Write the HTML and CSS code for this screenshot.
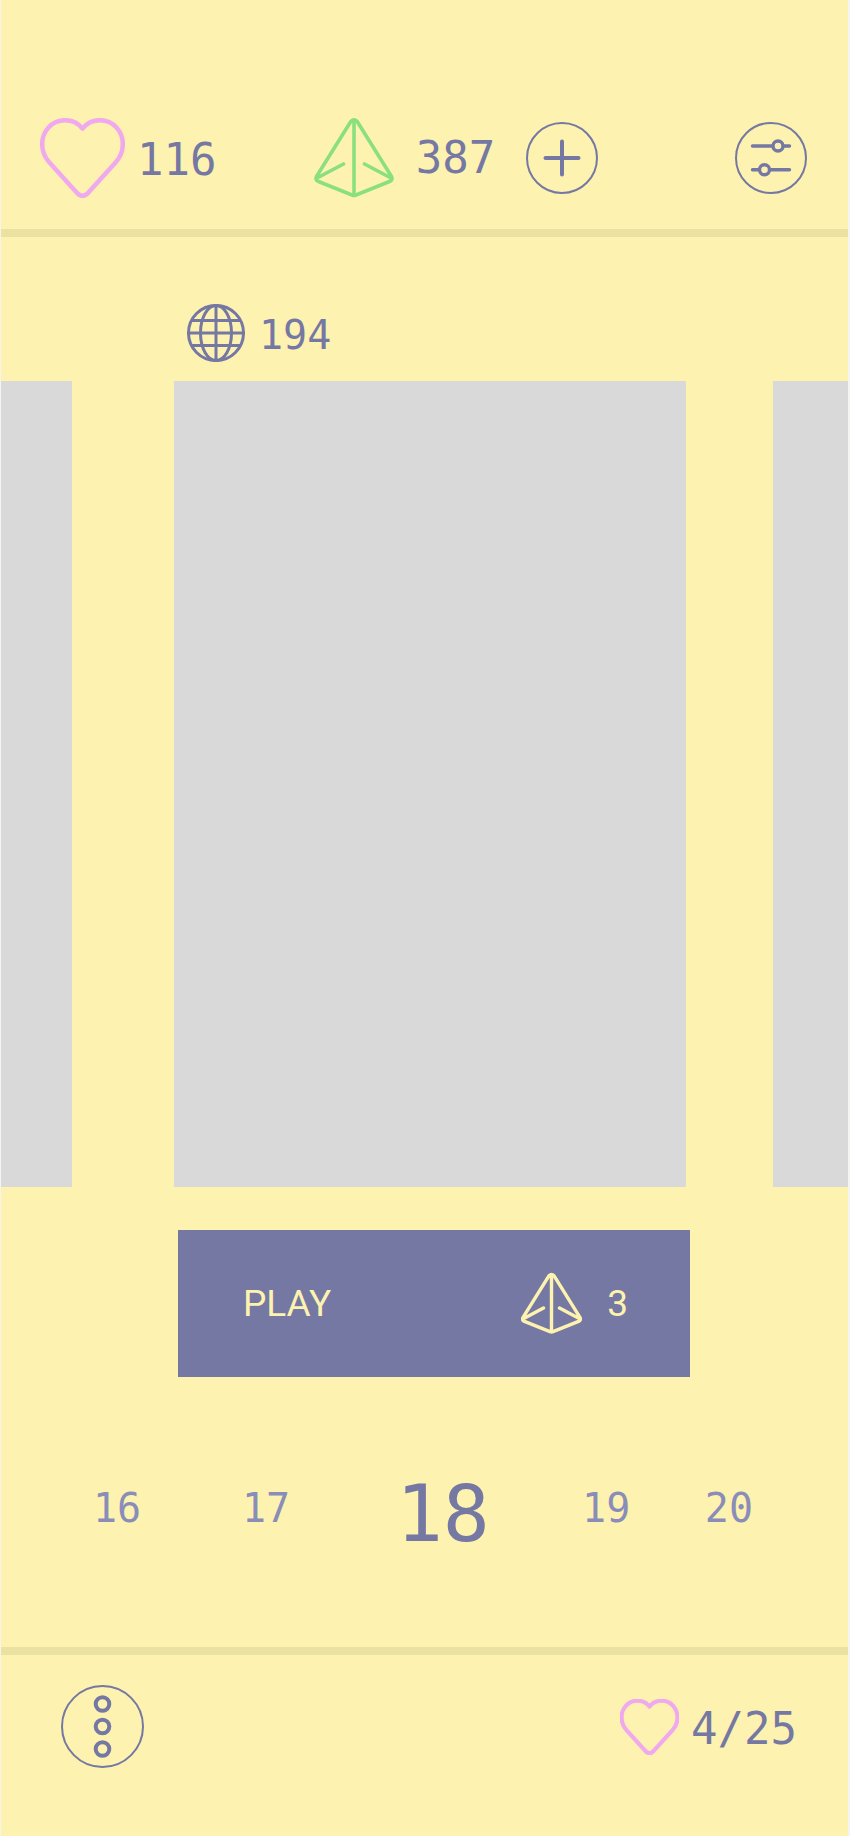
FILE: index.html
```html
<!DOCTYPE html>
<html lang="en">
<head>
<meta charset="utf-8">
<meta name="viewport" content="width=device-width, initial-scale=1">
<title>Level 18</title>
<link rel="stylesheet" href="styles.css">
</head>
<body>
<svg class="symbols" aria-hidden="true">
  <symbol id="heart" viewBox="0 0 85 80">
    <path d="M42.500 10.500C38 5 32 2.200 25 2.200C12 2.200 2.200 13 2.200 26C2.200 33 4.500 39 9 44L37.500 75.500Q42.500 80 47.500 75.500L76 44C80.500 39 82.800 33 82.800 26C82.800 13 73 2.200 60 2.200C53 2.200 47 5 42.500 10.500Z"/>
  </symbol>
  <symbol id="pyramid" viewBox="0 0 80 80">
    <path d="M36.800 3.500Q40 .2 43.200 3.500L77.500 58.500Q79 62 75.500 63.500L42 77Q40 77.800 38 77L4.500 63.500Q1 62 2.500 58.500ZM40 2V77M3 60L29.500 46M77 60L50.500 46"/>
  </symbol>
</svg>
<div class="screen">
  <header class="topbar">
    <div class="stat">
      <svg class="heart" width="85" height="80" aria-hidden="true"><use href="#heart"/></svg>
      <span class="count">116</span>
    </div>
    <div class="wallet">
      <svg class="pyramid" width="80" height="80" aria-hidden="true"><use href="#pyramid"/></svg>
      <span class="count">387</span>
      <button class="round" type="button" aria-label="Add">
        <svg width="72" height="72" viewBox="0 0 72 72" aria-hidden="true"><circle class="thin" cx="36" cy="36" r="35"/><path class="thick" d="M36 19.500V52.500M19.500 36H52.500"/></svg>
      </button>
    </div>
    <button class="round" type="button" aria-label="Settings">
      <svg width="72" height="72" viewBox="0 0 72 72" aria-hidden="true"><circle class="thin" cx="36" cy="36" r="35"/><path class="medium" d="M17.500 24H37M49 24H54.500M17.500 47.700H23M35 47.700H54.500"/><circle class="medium" cx="43" cy="24" r="5"/><circle class="medium" cx="29.500" cy="47.700" r="5"/></svg>
    </button>
  </header>

  <main>
    <section class="carousel" aria-label="Levels">
      <div class="plays">
        <svg width="58" height="58" viewBox="0 0 58 58" aria-hidden="true"><circle cx="29" cy="29" r="27.500"/><ellipse cx="29" cy="29" rx="15.500" ry="27.500"/><path d="M29 1V57M1 29H57M5 16.500H53M5 41.500H53"/></svg>
        <span>194</span>
      </div>
      <div class="card previous"></div>
      <div class="card current"></div>
      <div class="card next"></div>
      <button class="play" type="button">
        <span>PLAY</span>
        <span class="cost">
          <svg width="61" height="63" aria-hidden="true"><use href="#pyramid"/></svg>
          <span>3</span>
        </span>
      </button>
    </section>
    <nav class="levels" aria-label="Choose a level">
      <button type="button">16</button>
      <button type="button">17</button>
      <button class="selected" type="button" aria-current="true">18</button>
      <button type="button">19</button>
      <button type="button">20</button>
    </nav>
  </main>

  <footer class="bottombar">
    <button class="round" type="button" aria-label="Menu">
      <svg width="83" height="83" viewBox="0 0 83 83" aria-hidden="true"><circle class="thin" cx="41.500" cy="41.500" r="40.500"/><circle class="thick" cx="41.500" cy="19" r="6.800"/><circle class="thick" cx="41.500" cy="41.500" r="6.800"/><circle class="thick" cx="41.500" cy="64" r="6.800"/></svg>
    </button>
    <div class="stat">
      <svg class="heart small" width="59" height="56" aria-hidden="true"><use href="#heart"/></svg>
      <span class="count">4/25</span>
    </div>
  </footer>
</div>
</body>
</html>
```
FILE: styles.css
```css
* {
  box-sizing: border-box;
}

body {
  margin: 0;
  background: #f5f4f0;
  color: #7478a3;
  font-family: "DejaVu Sans Mono", monospace;
}

.symbols {
  position: absolute;
  width: 0;
  height: 0;
}

svg {
  display: block;
  flex: none;
  fill: none;
  stroke: #7478a3;
  stroke-linecap: round;
  stroke-linejoin: round;
}

button {
  padding: 0;
  border: 0;
  background: none;
  color: inherit;
  font: inherit;
  cursor: pointer;
}

.screen {
  display: flex;
  flex-direction: column;
  min-height: 100vh;
  margin: 0 2px 0 1px;
  background: #fdf2b0;
}

.topbar {
  display: grid;
  grid-template-columns: 13fr 20fr auto;
  align-items: center;
  padding: 118px 41px 31px 39px;
  border-bottom: 8px solid #ebe2a2;
}

.stat,
.wallet,
.plays,
.cost {
  display: flex;
  align-items: center;
}

.stat {
  gap: 12px;
}

.count {
  font-size: 44px;
  line-height: 48px;
}

.stat .count,
.plays span {
  padding-top: 4px;
}

.wallet .count {
  margin: 0 31px 0 22px;
}

.heart {
  stroke: #f0a8ee;
  stroke-width: 4.500px;
}

.heart.small {
  stroke-width: 6px;
}

.pyramid {
  stroke: #8ae07f;
  stroke-width: 3.600px;
}

.thin {
  stroke-width: 2px;
}

.medium {
  stroke-width: 3.400px;
}

.thick {
  stroke-width: 4px;
}

.carousel {
  display: grid;
  grid-template-columns: 71fr 102fr 512fr 87fr 75fr;
  padding-top: 67px;
}

.plays {
  grid-column: 3;
  gap: 14px;
  padding: 0 0 19px 13px;
  font-size: 40px;
  line-height: 48px;
}

.plays svg {
  stroke-width: 3px;
}

.card {
  grid-row: 2;
  background: #d9d9d9;
}

.previous {
  grid-column: 1;
}

.current {
  grid-column: 3;
  aspect-ratio: 512 / 806;
}

.next {
  grid-column: 5;
}

.play {
  grid-row: 3;
  grid-column: 3;
  display: flex;
  align-items: center;
  justify-content: space-between;
  height: 147px;
  margin: 43px -4px 0 4px;
  padding: 0 62px 0 65px;
  background: #7478a3;
  color: #fdf2b0;
  font-family: Roboto, sans-serif;
  font-size: 37px;
}

.cost {
  gap: 25px;
}

.cost svg {
  stroke: #fdf2b0;
  stroke-width: 4.500px;
}

.levels {
  display: grid;
  grid-template-columns: 148fr 153fr 185fr 122fr auto;
  align-items: center;
  justify-items: start;
  padding: 92px 95px 88px 92px;
  color: #8a8db8;
  font-size: 40px;
}

.levels button {
  padding-bottom: 12px;
}

.levels .selected {
  padding-bottom: 0;
  color: #7478a3;
  font-size: 78px;
}

.bottombar {
  display: flex;
  flex: 1;
  align-items: flex-start;
  justify-content: space-between;
  padding: 30px 51px 68px 60px;
  border-top: 8px solid #ebe2a2;
}

.bottombar .stat {
  height: 83px;
}
```
